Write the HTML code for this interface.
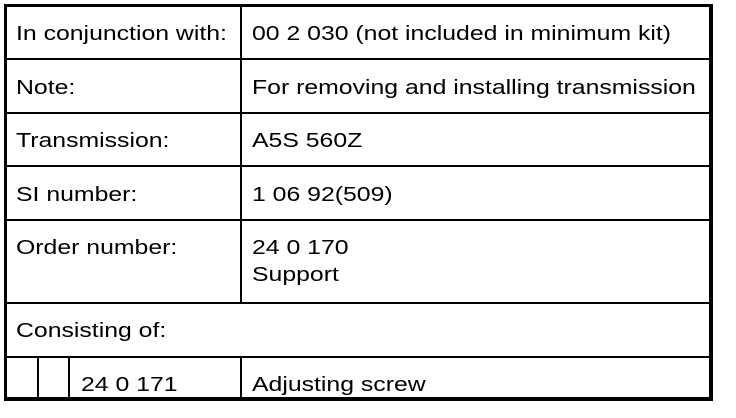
<!DOCTYPE html>
<html><head><style>
body{margin:0;width:736px;height:418px;background:#fff;position:relative;overflow:hidden;font-family:"Liberation Sans",Arial,sans-serif;font-size:20px;color:#000}
.l{position:absolute;background:#000}
.t{position:absolute;white-space:nowrap;line-height:22px;transform:scaleX(1.24);transform-origin:0 50%}
</style></head><body>
<div class="l" style="left:4px;top:4px;width:709px;height:3px"></div>
<div class="l" style="left:4px;top:397px;width:709px;height:4px"></div>
<div class="l" style="left:4px;top:4px;width:3px;height:397px"></div>
<div class="l" style="left:709px;top:4px;width:4px;height:397px"></div>
<div class="l" style="left:4px;top:58px;width:709px;height:2px"></div>
<div class="l" style="left:4px;top:112px;width:709px;height:2px"></div>
<div class="l" style="left:4px;top:165px;width:709px;height:2px"></div>
<div class="l" style="left:4px;top:219px;width:709px;height:2px"></div>
<div class="l" style="left:4px;top:302px;width:709px;height:2px"></div>
<div class="l" style="left:4px;top:356px;width:709px;height:2px"></div>
<div class="l" style="left:240px;top:4px;width:2px;height:299px"></div>
<div class="l" style="left:240px;top:356px;width:2px;height:43px"></div>
<div class="l" style="left:37px;top:356px;width:2px;height:43px"></div>
<div class="l" style="left:68px;top:356px;width:2px;height:43px"></div>
<div class="t" style="left:16px;top:23px">In conjunction with:</div>
<div class="t" style="left:252px;top:23px">00 2 030 (not included in minimum kit)</div>
<div class="t" style="left:16px;top:77px">Note:</div>
<div class="t" style="left:252px;top:77px">For removing and installing transmission</div>
<div class="t" style="left:16px;top:130px">Transmission:</div>
<div class="t" style="left:252px;top:130px">A5S 560Z</div>
<div class="t" style="left:16px;top:184px">SI number:</div>
<div class="t" style="left:252px;top:184px">1 06 92(509)</div>
<div class="t" style="left:16px;top:237px">Order number:</div>
<div class="t" style="left:252px;top:237px">24 0 170</div>
<div class="t" style="left:252px;top:264px">Support</div>
<div class="t" style="left:16px;top:320px">Consisting of:</div>
<div class="t" style="left:81px;top:374px">24 0 171</div>
<div class="t" style="left:252px;top:374px">Adjusting screw</div>
</body></html>
